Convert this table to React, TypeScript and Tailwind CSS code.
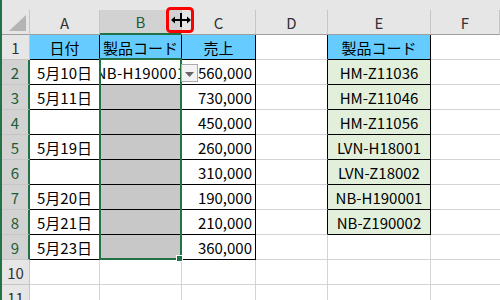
import React from 'react';

const dates = ['5月10日', '5月11日', '', '5月19日', '', '5月20日', '5月21日', '5月23日'];
const sales = ['560,000', '730,000', '450,000', '260,000', '310,000', '190,000', '210,000', '360,000'];
const codes = ['HM-Z11036', 'HM-Z11046', 'HM-Z11056', 'LVN-H18001', 'LVN-Z18002', 'NB-H190001', 'NB-Z190002'];

const colHeads = [
  { key: 'A', cls: 'w-[70px]' },
  { key: 'B', cls: 'w-[82px]' },
  { key: 'C', cls: 'w-[74px]' },
  { key: 'D', cls: 'w-[72px]' },
  { key: 'E', cls: 'w-[103px]' },
  { key: 'F', cls: 'flex-1' },
];

const App: React.FC = () => {
  const rows = Array.from({ length: 11 }, (_, i) => i + 1);

  return (
    <div className="relative w-[500px] h-[300px] overflow-hidden bg-white flex text-[15px] leading-none text-black font-['Noto_Sans_CJK_JP','Noto_Sans',sans-serif]">
      <div className="w-[2px] shrink-0 bg-[#217346]" />
      <div className="flex flex-col flex-1">
        {/* column headers */}
        <div className="flex h-[35px] shrink-0 bg-[#e6e6e6] pt-[10px]">
          <div className="w-[28px] h-[25px] border-r border-r-[#c6c6c6] border-b border-b-[#9e9e9e] flex items-end justify-end pr-[3px] pb-[3px]">
            <svg width="17" height="16" viewBox="0 0 17 16">
              <polygon points="17,0 17,16 0,16" fill="#b4b4b4" />
            </svg>
          </div>
          {colHeads.map((c) =>
            c.key === 'B' ? (
              <div key={c.key} className={`${c.cls} h-[25px] flex items-center justify-center bg-[#d2d2d2] border-r border-r-[#c6c6c6] border-b-2 border-b-[#217346] text-[#1d5c37]`}>
                {c.key}
              </div>
            ) : (
              <div key={c.key} className={`${c.cls} h-[25px] flex items-center justify-center border-r border-r-[#c6c6c6] border-b border-b-[#9e9e9e] text-[#333]`}>
                {c.key}
              </div>
            )
          )}
        </div>

        {rows.map((r) => {
          const sel = r >= 2 && r <= 9;
          const inTable = r <= 9;
          const inE = r <= 8;
          const d = r - 2;
          return (
            <div key={r} className="flex h-[25px] shrink-0">
              <div
                className={
                  sel
                    ? 'w-[28px] flex items-center justify-center bg-[#d2d2d2] border-b border-b-[#c6c6c6] border-r-2 border-r-[#217346] text-[#1d5c37]'
                    : 'w-[28px] flex items-center justify-center bg-[#e6e6e6] border-b border-b-[#c6c6c6] border-r border-r-[#c6c6c6] text-[#333]'
                }
              >
                {r}
              </div>
              {/* A */}
              <div
                className={
                  r === 1
                    ? 'w-[70px] flex items-center justify-center border-r border-b border-black bg-[#66ccff]'
                    : inTable
                    ? 'w-[70px] flex items-center justify-center border-r border-b border-black'
                    : 'w-[70px] flex items-center justify-center border-r border-b border-[#d4d4d4]'
                }
              >
                {r === 1 ? '日付' : sel ? dates[d] : ''}
              </div>
              {/* B */}
              <div
                className={
                  r === 1
                    ? 'w-[82px] flex items-center justify-center border-r border-b border-black bg-[#66ccff] overflow-hidden whitespace-nowrap'
                    : r === 2
                    ? 'w-[82px] flex items-center justify-center border-r border-b border-black overflow-hidden whitespace-nowrap tracking-[0.3px]'
                    : inTable
                    ? 'w-[82px] flex items-center justify-center border-r border-b border-black bg-[#c8c8c8]'
                    : 'w-[82px] border-r border-b border-[#d4d4d4]'
                }
              >
                {r === 1 ? '製品コード' : r === 2 ? 'NB-H190001' : ''}
              </div>
              {/* C */}
              <div
                className={
                  r === 1
                    ? 'w-[74px] flex items-center justify-center border-r border-b border-black bg-[#66ccff]'
                    : inTable
                    ? 'w-[74px] flex items-center justify-end pr-[3px] border-r border-b border-black'
                    : 'w-[74px] border-r border-b border-[#d4d4d4]'
                }
              >
                {r === 1 ? '売上' : sel ? sales[d] : ''}
              </div>
              {/* D */}
              <div
                className={
                  inE
                    ? 'w-[72px] border-r border-r-black border-b border-b-[#d4d4d4]'
                    : 'w-[72px] border-r border-b border-[#d4d4d4]'
                }
              />
              {/* E */}
              <div
                className={
                  r === 1
                    ? 'w-[103px] flex items-center justify-center border-r border-b border-black bg-[#66ccff]'
                    : inE
                    ? 'w-[103px] flex items-center justify-center border-r border-b border-black bg-[#e2efda]'
                    : 'w-[103px] border-r border-b border-[#d4d4d4]'
                }
              >
                {r === 1 ? '製品コード' : inE ? codes[d] : ''}
              </div>
              {/* F */}
              <div className="flex-1 border-b border-[#d4d4d4]" />
            </div>
          );
        })}
      </div>

      {/* selection outline B2:B9 */}
      <div className="absolute left-[99px] top-[58px] w-[83px] h-[202px] border-2 border-[#217346] pointer-events-none" />
      <div className="absolute left-[176px] top-[255px] w-[7px] h-[7px] bg-[#217346] border border-white" />

      {/* validation dropdown */}
      <div className="absolute left-[181px] top-[64px] w-[17px] h-[18px] bg-[#f3f3f3] border border-[#acacac] flex items-end justify-center pb-[4px]">
        <svg width="9" height="5" viewBox="0 0 9 5">
          <polygon points="0,0 9,0 4.5,5" fill="#666" />
        </svg>
      </div>

      {/* column resize cursor */}
      <svg className="absolute left-[166px] top-[7px]" width="28" height="26" viewBox="0 0 28 26">
        <rect x="1.5" y="1.5" width="25" height="23" rx="3" fill="none" stroke="#ff0000" strokeWidth="3" />
        <rect x="14" y="6" width="2" height="14" fill="#000" />
        <rect x="7" y="12" width="16" height="2" fill="#000" />
        <polygon points="5,13 9,9.5 9,16.5" fill="#000" />
        <polygon points="25,13 21,9.5 21,16.5" fill="#000" />
      </svg>
    </div>
  );
};

export default App;
